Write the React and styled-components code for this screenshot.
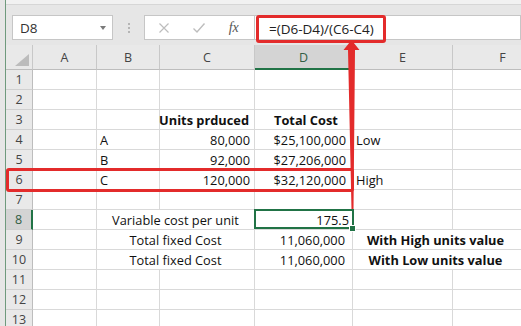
import React from 'react';
import styled, { createGlobalStyle } from 'styled-components';

//============ global
const GlobalStyle = createGlobalStyle`
  html, body {
    margin: 0;
    padding: 0;
    background: #fff;
  }
  body {
    font-family: "Open Sans", "Liberation Sans", sans-serif;
  }
`;

const GREEN = '#217346';
const RED = '#e32b2b';
const GRID = '#d9d9d9';

//============ styled components
const Window = styled.div`
  position: relative;
  width: 521px;
  height: 326px;
  overflow: hidden;
  background: #e6e6e6;
  padding-left: 5px;
  box-sizing: border-box;
`;
const Inner = styled.div`
  height: 100%;
  border-left: 1px solid #6f9a7d;
  display: flex;
  flex-direction: column;
`;
const TopStrip = styled.div`
  flex-shrink: 0;
  height: 4px;
  background: #f1f1f1;
  border-bottom: 1px solid #d6d6d6;
`;
const FormulaBar = styled.div`
  flex-shrink: 0;
  display: flex;
  align-items: flex-start;
  height: 40px;
  padding: 10px 0 0 6px;
  box-sizing: border-box;
`;
const NameBox = styled.div`
  width: 101px;
  height: 25px;
  box-sizing: border-box;
  background: #fff;
  border: 1px solid #c6c6c6;
  display: flex;
  align-items: center;
  justify-content: space-between;
  padding: 0 6px 0 7px;
  font-size: 13.5px;
  color: #333;
`;
const DropArrow = styled.span`
  width: 0;
  height: 0;
  border-left: 3.5px solid transparent;
  border-right: 3.5px solid transparent;
  border-top: 4px solid #7a7a7a;
`;
const Grip = styled.div`
  width: 31px;
  height: 25px;
  display: flex;
  flex-direction: column;
  align-items: center;
  justify-content: center;
  gap: 2px;
  & span {
    width: 2px;
    height: 2px;
    background: #b5b5b5;
  }
`;
const FuncBox = styled.div`
  width: 110px;
  height: 25px;
  box-sizing: border-box;
  background: #fff;
  border: 1px solid #c6c6c6;
  border-right: none;
  display: flex;
  align-items: center;
  justify-content: space-around;
  padding: 0 4px 0 2px;
`;
const Fx = styled.span`
  font-family: "Liberation Serif", serif;
  font-style: italic;
  font-size: 14px;
  color: #555;
`;
const FormulaInput = styled.div`
  flex: 1;
  height: 25px;
  box-sizing: border-box;
  background: #fff;
  border: 1px solid #c6c6c6;
  display: flex;
  align-items: flex-start;
`;
const FormulaText = styled.div`
  height: 28px;
  box-sizing: border-box;
  margin: -1px 0 0 1px;
  border: 3px solid ${RED};
  border-radius: 3px;
  padding: 0 9px 0 10px;
  display: flex;
  align-items: center;
  font-size: 13.5px;
  color: #222;
  white-space: nowrap;
`;
const Sheet = styled.div`
  flex: 1;
  min-height: 0;
  overflow: hidden;
  background: #fff;
  display: grid;
  grid-template-columns: 27px 64px 63px 95px 98px 100px 100px;
  grid-template-rows: 25px;
  grid-auto-rows: 20px;
`;
const Corner = styled.div`
  position: relative;
  background: #e9e9e9;
  border-right: 1px solid #c8c8c8;
  border-bottom: 1px solid #bdbdbd;
  box-sizing: border-box;
  &::after {
    content: "";
    position: absolute;
    right: 3px;
    bottom: 3px;
    border-left: 14px solid transparent;
    border-bottom: 12px solid #bcbcbc;
  }
`;
const ColHead = styled.div`
  background: ${(p) => (p.$active ? '#d4d4d4' : '#e9e9e9')};
  border-right: 1px solid #c8c8c8;
  border-bottom: ${(p) => (p.$active ? `2px solid ${GREEN}` : '1px solid #bdbdbd')};
  box-sizing: border-box;
  display: flex;
  align-items: center;
  justify-content: center;
  padding-top: ${(p) => (p.$active ? '1px' : '0')};
  font-size: 12.5px;
  color: ${(p) => (p.$active ? '#335e45' : '#444')};
`;
const RowHead = styled.div`
  background: ${(p) => (p.$active ? '#d4d4d4' : '#e9e9e9')};
  border-right: ${(p) => (p.$active ? `2px solid ${GREEN}` : '1px solid #bdbdbd')};
  border-bottom: 1px solid #d0d0d0;
  box-sizing: border-box;
  display: flex;
  align-items: center;
  justify-content: center;
  font-size: 12.5px;
  color: ${(p) => (p.$active ? '#335e45' : '#444')};
`;
const Cell = styled.div`
  position: relative;
  grid-column: span ${(p) => p.$span || 1};
  border-right: 1px solid ${GRID};
  border-bottom: 1px solid ${GRID};
  box-sizing: border-box;
  display: flex;
  align-items: center;
  justify-content: ${(p) => ({ left: 'flex-start', right: 'flex-end', center: 'center' }[p.$align || 'left'])};
  padding: ${(p) => (p.$align === 'right' ? `0 ${p.$pad ?? 4}px 0 0` : p.$align === 'center' ? `0 ${p.$pad ?? 0}px 0 0` : `0 0 0 ${p.$pad ?? 3}px`)};
  font-size: 12.8px;
  font-weight: ${(p) => (p.$bold ? 700 : 400)};
  color: #111;
  white-space: nowrap;
  ${(p) => p.$selected && `
    z-index: 2;
    &::after {
      content: "";
      position: absolute;
      left: -1px;
      top: -1px;
      right: -2px;
      bottom: 0;
      border: 2px solid ${GREEN};
    }
    &::before {
      content: "";
      position: absolute;
      right: -4px;
      bottom: -3px;
      width: 5px;
      height: 5px;
      background: ${GREEN};
      border: 1px solid #fff;
      z-index: 3;
    }
  `}
`;
const RowCallout = styled.div`
  position: absolute;
  left: 6px;
  top: 168px;
  width: 348px;
  height: 24px;
  box-sizing: border-box;
  border: 3px solid ${RED};
  border-radius: 3px;
  pointer-events: none;
`;
const ArrowLayer = styled.svg`
  position: absolute;
  left: 0;
  top: 0;
  pointer-events: none;
`;

const COLS = ['A', 'B', 'C', 'D', 'E', 'F'];

// cells per row: key = column, span = merged columns
const DATA = {
  3: { C: { text: 'Units prduced', bold: true, align: 'right', pad: 5 }, D: { text: 'Total Cost', bold: true, pad: 19 } },
  4: { B: { text: 'A' }, C: { text: '80,000', align: 'right' }, D: { text: '$25,100,000', align: 'right', pad: 6 }, E: { text: 'Low' } },
  5: { B: { text: 'B' }, C: { text: '92,000', align: 'right' }, D: { text: '$27,206,000', align: 'right', pad: 6 } },
  6: { B: { text: 'C' }, C: { text: '120,000', align: 'right' }, D: { text: '$32,120,000', align: 'right', pad: 6 }, E: { text: 'High' } },
  8: { B: { text: 'Variable cost per unit', align: 'center', span: 2 }, D: { text: '175.5', align: 'right', pad: 3, selected: true } },
  9: { B: { text: 'Total fixed Cost', align: 'center', span: 2 }, D: { text: '11,060,000', align: 'right', pad: 7 }, E: { text: 'With High units value', bold: true, align: 'center', span: 2, pad: 34 } },
  10: { B: { text: 'Total fixed Cost', align: 'center', span: 2 }, D: { text: '11,060,000', align: 'right', pad: 7 }, E: { text: 'With Low units value', bold: true, align: 'center', span: 2, pad: 34 } },
};

function SheetRow({ n }) {
  const row = DATA[n] || {};
  const out = [<RowHead key="h" $active={n === 8}>{n}</RowHead>];
  let skip = 0;
  COLS.forEach((c) => {
    if (skip > 0) { skip -= 1; return; }
    const cell = row[c];
    if (cell && cell.span) skip = cell.span - 1;
    out.push(
      <Cell key={c} $span={cell?.span} $align={cell?.align} $bold={cell?.bold} $pad={cell?.pad} $selected={cell?.selected}>
        {cell?.text}
      </Cell>
    );
  });
  return out;
}

export default function App() {
  const rows = Array.from({ length: 13 }, (_, i) => i + 1);
  return (
    <Window>
      <GlobalStyle />
      <Inner>
        <TopStrip />
        <FormulaBar>
          <NameBox>
            D8
            <DropArrow />
          </NameBox>
          <Grip><span /><span /><span /></Grip>
          <FuncBox>
            <svg width="12" height="12" viewBox="0 0 12 12">
              <path d="M1.5 1.5 L10.5 10.5 M10.5 1.5 L1.5 10.5" stroke="#bdbdbd" strokeWidth="1.2" fill="none" />
            </svg>
            <svg width="14" height="12" viewBox="0 0 14 12">
              <path d="M1.5 6.5 L5 10 L12.5 1.5" stroke="#bdbdbd" strokeWidth="1.4" fill="none" />
            </svg>
            <Fx>fx</Fx>
          </FuncBox>
          <FormulaInput>
            <FormulaText>=(D6-D4)/(C6-C4)</FormulaText>
          </FormulaInput>
        </FormulaBar>
        <Sheet>
          <Corner />
          {COLS.map((c) => (
            <ColHead key={c} $active={c === 'D'}>{c}</ColHead>
          ))}
          {rows.map((n) => (
            <SheetRow key={n} n={n} />
          ))}
        </Sheet>
      </Inner>
      <RowCallout />
      <ArrowLayer width="521" height="326" viewBox="0 0 521 326">
        <polygon
          points="351.5,40 359.5,50 355,50 353.5,210 351.5,210 348,50 343.5,50"
          fill={RED}
        />
      </ArrowLayer>
    </Window>
  );
}
